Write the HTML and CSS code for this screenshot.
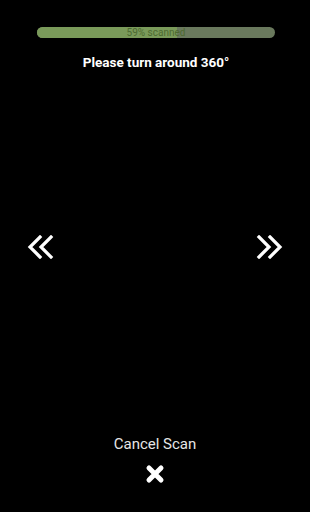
FILE: index.html
```html
<!DOCTYPE html>
<html>
<head>
  <title>Scan</title>
  <link rel="stylesheet" href="styles.css">
</head>
<body>
  <div class="screen">
    <div class="top">
      <div class="progress">
        <div class="fill" style="width:59%"></div>
        <span class="label">59% scanned</span>
      </div>
      <h1 class="hint">Please turn around 360°</h1>
    </div>
    <div class="arrows">
      <svg class="chev" width="28" height="24" viewBox="0 0 28 24">
        <path d="M13 2 L3 12 L13 22 M24 2 L14 12 L24 22" fill="none" stroke="#fff" stroke-width="3.2" stroke-linecap="square"/>
      </svg>
      <svg class="chev" width="28" height="24" viewBox="0 0 28 24">
        <path d="M4 2 L14 12 L4 22 M15 2 L25 12 L15 22" fill="none" stroke="#fff" stroke-width="3.2" stroke-linecap="square"/>
      </svg>
    </div>
    <div class="bottom">
      <div class="cancel">Cancel Scan</div>
      <svg class="close" width="20" height="20" viewBox="0 0 20 20">
        <path d="M4 4 L16 16 M16 4 L4 16" stroke="#fff" stroke-width="5" stroke-linecap="round"/>
      </svg>
    </div>
  </div>
</body>
</html>
```

FILE: styles.css
```css
html, body {
  margin: 0;
  height: 100%;
  background: #000;
}
.screen {
  height: 512px;
  display: flex;
  flex-direction: column;
  font-family: Roboto, "Liberation Sans", sans-serif;
  color: #fff;
}
.top {
  padding: 27px 35px 0 37px;
  display: flex;
  flex-direction: column;
  align-items: center;
}
.progress {
  position: relative;
  width: 100%;
  height: 11px;
  border-radius: 6px;
  background: #6a795d;
  overflow: hidden;
}
.fill {
  height: 100%;
  background: #7a9a5a;
}
.label {
  position: absolute;
  inset: 0;
  text-align: center;
  font-size: 10px;
  line-height: 11px;
  color: #4d6a31;
}
.hint {
  margin: 16px 0 0;
  font-size: 13.5px;
  font-weight: bold;
}
.arrows {
  display: flex;
  justify-content: space-between;
  padding: 0 27px 0 27px;
  margin-top: 165px;
}
.bottom {
  margin-top: auto;
  padding-bottom: 28px;
  display: flex;
  flex-direction: column;
  align-items: center;
}
.cancel {
  font-size: 15px;
  color: #e6e6e6;
}
.close {
  margin-top: 11px;
}
```
